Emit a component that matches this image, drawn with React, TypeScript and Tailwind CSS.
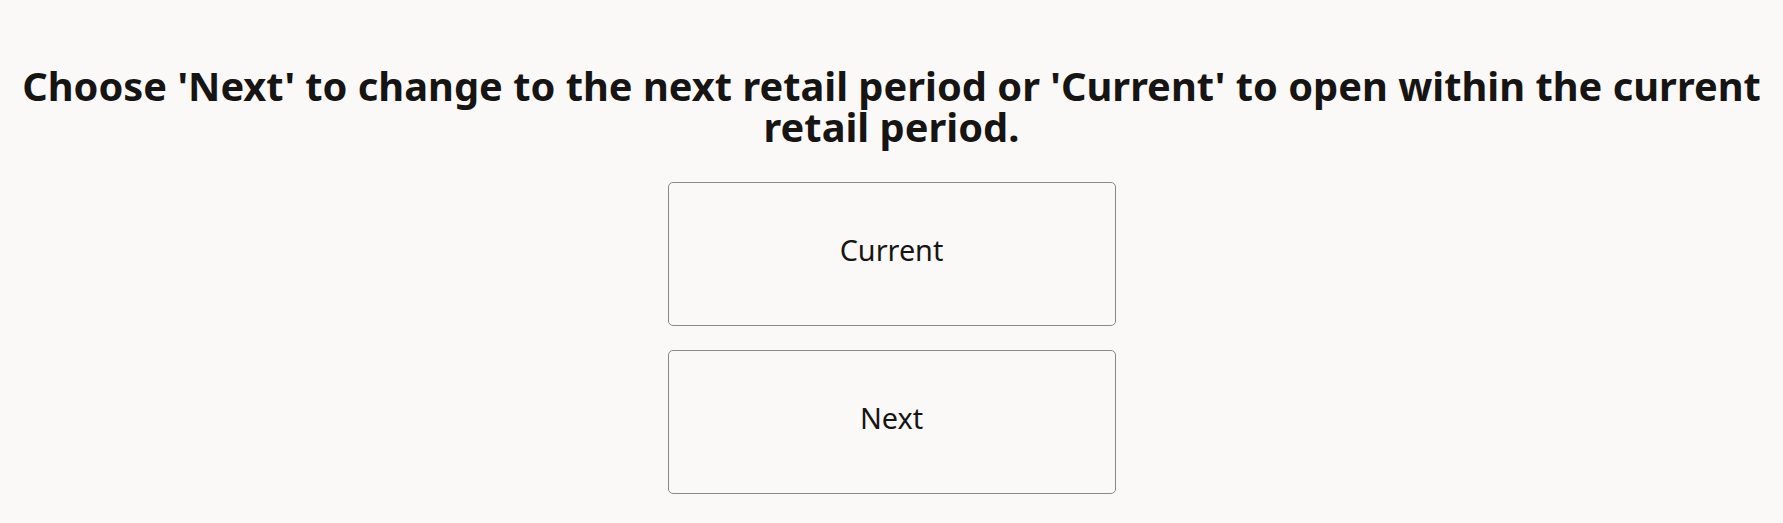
import React from "react";

export default function App() {
  const choose = (which: string) => {
    // eslint-disable-next-line no-console
    console.log("chosen:", which);
  };

  return (
    <div
      className="min-h-[523px] w-full bg-[#fbf9f8] text-[#161513] flex flex-col items-center pt-[65px]"
      style={{ fontFamily: '"Noto Sans", "Open Sans", sans-serif' }}
    >
      <h1 className="px-4 text-center text-[39.8px] leading-[41px] font-bold">
        Choose 'Next' to change to the next retail period or 'Current' to open within the current retail period.
      </h1>

      <div className="mt-[35px] flex flex-col gap-[24px]">
        <button
          type="button"
          onClick={() => choose("current")}
          className="flex h-[144px] w-[448px] items-center justify-center rounded-[5px] border border-[#8a8987] bg-[#fbf9f8] pb-[8px] text-[28.8px] text-[#161513]"
        >
          Current
        </button>
        <button
          type="button"
          onClick={() => choose("next")}
          className="flex h-[144px] w-[448px] items-center justify-center rounded-[5px] border border-[#8a8987] bg-[#fbf9f8] pb-[8px] text-[28.8px] text-[#161513]"
        >
          Next
        </button>
      </div>
    </div>
  );
}
